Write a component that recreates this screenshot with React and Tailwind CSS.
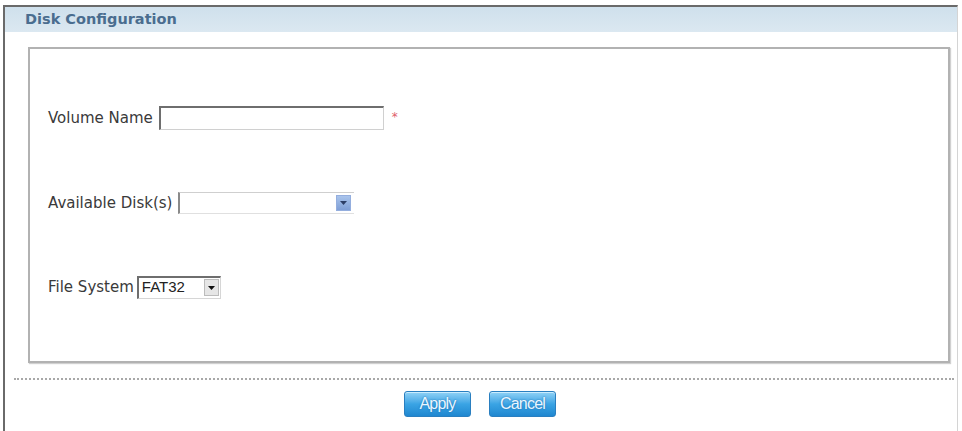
import React, { useState } from "react";

const font = { fontFamily: '"DejaVu Sans", Verdana, sans-serif' };

function Arrow({ className }) {
  return (
    <svg width="7" height="4" viewBox="0 0 7 4" className={className}>
      <path d="M0 0h7L3.5 4z" fill="currentColor" />
    </svg>
  );
}

function BlueButton({ children, onClick }) {
  return (
    <button
      type="button"
      onClick={onClick}
      className="h-[26px] w-[67px] rounded-[3px] border border-[#2a7fc0] bg-gradient-to-b from-[#8fd2f6] via-[#3aa4e4] to-[#1f87d0] text-[16px] text-[#eaf6ff] shadow-[inset_0_1px_0_#c9ecff] [text-shadow:0_0_2px_#1a6fb0]"
      style={{ fontFamily: '"Liberation Sans Narrow", "Liberation Sans", Arial, sans-serif', letterSpacing: "-0.8px" }}
    >
      {children}
    </button>
  );
}

export default function App() {
  const [volume, setVolume] = useState("");
  const [fs, setFs] = useState("FAT32");

  return (
    <div className="w-[962px] h-[431px] bg-white overflow-hidden pt-[5px] pl-[3px]" style={font}>
      <div className="w-[955px] h-[426px] border-l-2 border-t-2 border-[#6a6a6a] border-r border-r-[#d4d4d4]">
        {/* title bar */}
        <div className="h-[25px] bg-gradient-to-b from-[#cfe0ec] to-[#dbe8f1] flex items-center pl-[20px]">
          <span className="text-[14.5px] font-bold text-[#4a6d8f]">Disk Configuration</span>
        </div>

        {/* form panel */}
        <div className="ml-[23px] mt-[15px] w-[922px] h-[316px] border-2 border-[#b2b2b2] shadow-[1px_1px_1px_#d0d0d0] pl-[18px]">
          <div className="flex items-center mt-[57px] text-[15px] text-[#3a3a3a]">
            <span>Volume Name</span>
            <input
              value={volume}
              onChange={(e) => setVolume(e.target.value)}
              className="ml-[6px] w-[225px] h-[24px] border-t-2 border-l-2 border-t-[#6e6e6e] border-l-[#6e6e6e] border-r border-b border-r-[#d0d0d0] border-b-[#d0d0d0] outline-none px-1"
            />
            <span className="ml-[8px] text-[#e0606a] text-[12px] -mt-[2px]">*</span>
          </div>

          <div className="flex items-center mt-[62px] text-[15px] text-[#3a3a3a]">
            <span>Available Disk(s)</span>
            <div className="ml-[6px] w-[176px] h-[22px] border-l-2 border-l-[#8a8a8a] border-t border-t-[#cfcfcf] border-b border-b-[#e0e0e0] flex items-center justify-end pr-[3px]">
              <div className="w-[15px] h-[16px] bg-gradient-to-b from-[#a9c4ec] to-[#7f9fd6] border border-[#94aede] flex items-center justify-center">
                <Arrow className="text-[#2c3e66]" />
              </div>
            </div>
          </div>

          <div className="flex items-center mt-[61px] text-[15px] text-[#3a3a3a]">
            <span>File System</span>
            <div className="ml-[3px] w-[84px] h-[23px] border-t-2 border-l-2 border-t-[#6e6e6e] border-l-[#6e6e6e] border-r border-b border-r-[#d6d6d6] border-b-[#d6d6d6] flex items-center justify-between pl-[3px] pr-[1px]">
              <span className="text-[15px] text-[#222]" style={{ fontFamily: '"Liberation Sans", Arial, sans-serif' }} onClick={() => setFs(fs)}>{fs}</span>
              <div className="w-[15px] h-[17px] bg-[#e6e6e6] border border-[#bcbcbc] flex items-center justify-center">
                <Arrow className="text-[#111]" />
              </div>
            </div>
          </div>
        </div>

        {/* divider */}
        <div className="ml-[9px] mt-[15px] w-[940px] border-t-2 border-dotted border-[#a8a8a8]" />

        <div className="flex justify-center gap-[18px] mt-[11px] pr-[2px]">
          <BlueButton>Apply</BlueButton>
          <BlueButton>Cancel</BlueButton>
        </div>
      </div>
    </div>
  );
}
